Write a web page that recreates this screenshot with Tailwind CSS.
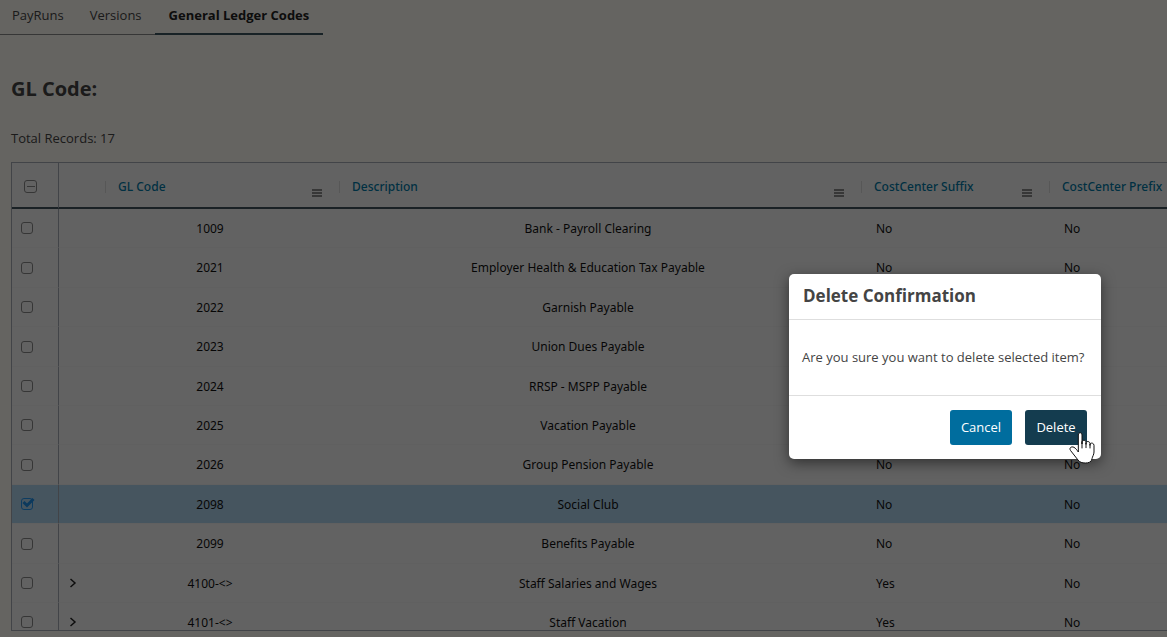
<!DOCTYPE html>
<html lang="en">
<head>
<meta charset="utf-8">
<meta name="viewport" content="width=device-width, initial-scale=1">
<title>General Ledger Codes</title>
<script src="https://cdn.jsdelivr.net/npm/@tailwindcss/browser@4"></script>
</head>
<body class="relative h-screen overflow-hidden bg-[#fdfaf3] font-['Open_Sans',sans-serif] text-[13px] text-[#444]">
<svg class="hidden" aria-hidden="true">
  <symbol id="menu" viewBox="0 0 10 8"><path d="M0 1h10M0 4h10M0 7h10" stroke="#666" stroke-width="1.4"/></symbol>
  <symbol id="chevron" viewBox="0 0 8 10"><path d="M1.5 1 6 5 1.5 9" fill="none" stroke="#222" stroke-width="1.5"/></symbol>
</svg>
<nav class="flex h-[35px] items-stretch leading-[30px]">
  <a href="#payruns" class="border-b border-[#888] pl-3 pr-[13px]">PayRuns</a>
  <a href="#versions" class="border-b border-[#888] px-[13px]">Versions</a>
  <a href="#ledger" class="border-b-2 border-[#3c5560] px-[14px] font-bold text-[#222]">General Ledger Codes</a>
</nav>
<main class="pl-[11px]">
  <h1 class="pt-10 text-xl leading-7 font-bold">GL Code:</h1>
  <p class="pt-[25px] leading-5">Total Records: 17</p>
  <div class="mt-[14px] h-[469px] overflow-hidden border-y border-l border-[#a6abb3] bg-[#f6f6f6]">
    <table class="w-full table-fixed border-separate border-spacing-0 font-['Noto_Sans',sans-serif] text-xs text-[#111]">
      <colgroup><col class="w-[47px]"><col class="w-[46px]"><col class="w-[234px]"><col><col class="w-[188px]"><col class="w-[118px]"></colgroup>
      <thead class="text-left text-[#0079a5] [&_th]:h-[46px] [&_th]:border-b-2 [&_th]:border-[#43545c] [&_th]:px-0 [&_th]:pt-[3px] [&_th]:pb-0 [&_th]:font-medium">
        <tr>
          <th class="border-r border-r-[#a6abb3]!"><input type="checkbox" aria-label="Select all rows" class="ml-3 block size-[13px] appearance-none rounded-[3px] border border-[#888] bg-[linear-gradient(#888,#888)] bg-[length:8px_1px] bg-center bg-no-repeat"></th>
          <th aria-label="Expand"></th>
          <th><div class="flex h-3 items-center border-l border-[#dadada] pr-[17px] pl-3"><span class="flex-1">GL Code</span><button type="button" aria-label="GL Code menu" class="pt-3"><svg class="h-2 w-[10px]"><use href="#menu"/></svg></button></div></th>
          <th><div class="flex h-3 items-center border-l border-[#dadada] pr-[17px] pl-3"><span class="flex-1">Description</span><button type="button" aria-label="Description menu" class="pt-3"><svg class="h-2 w-[10px]"><use href="#menu"/></svg></button></div></th>
          <th><div class="flex h-3 items-center border-l border-[#dadada] pr-[17px] pl-3"><span class="flex-1">CostCenter Suffix</span><button type="button" aria-label="CostCenter Suffix menu" class="pt-3"><svg class="h-2 w-[10px]"><use href="#menu"/></svg></button></div></th>
          <th><div class="flex h-3 items-center border-l border-[#dadada] pl-3 whitespace-nowrap">CostCenter Prefix</div></th>
        </tr>
      </thead>
      <tbody class="[&_td]:h-[39px] [&_td]:border-b [&_td]:border-[#f0f0f0] [&_td]:p-0 [&>tr:nth-child(5n+2)>td]:h-10 [&>tr:nth-child(5n+4)>td]:h-10 [&_td:nth-child(1)]:border-r [&_td:nth-child(1)]:border-r-[#a6abb3] [&_td:nth-child(n+3)]:pt-px [&_td:nth-child(3)]:pr-6 [&_td:nth-child(3)]:text-center [&_td:nth-child(4)]:pr-6 [&_td:nth-child(4)]:text-center [&_td:nth-child(5)]:pl-[15px] [&_td:nth-child(6)]:pl-[15px] [&_input]:ml-[9px] [&_input]:block [&_input]:size-3 [&_input]:appearance-none [&_input]:rounded-[3px] [&_input]:border [&_input]:border-[#888]">
        <tr><td><input type="checkbox" aria-label="Select 1009"></td><td></td><td>1009</td><td>Bank - Payroll Clearing</td><td>No</td><td>No</td></tr>
        <tr><td><input type="checkbox" aria-label="Select 2021"></td><td></td><td>2021</td><td>Employer Health &amp; Education Tax Payable</td><td>No</td><td>No</td></tr>
        <tr><td><input type="checkbox" aria-label="Select 2022"></td><td></td><td>2022</td><td>Garnish Payable</td><td>No</td><td>No</td></tr>
        <tr><td><input type="checkbox" aria-label="Select 2023"></td><td></td><td>2023</td><td>Union Dues Payable</td><td>No</td><td>No</td></tr>
        <tr><td><input type="checkbox" aria-label="Select 2024"></td><td></td><td>2024</td><td>RRSP - MSPP Payable</td><td>No</td><td>No</td></tr>
        <tr><td><input type="checkbox" aria-label="Select 2025"></td><td></td><td>2025</td><td>Vacation Payable</td><td>No</td><td>No</td></tr>
        <tr><td><input type="checkbox" aria-label="Select 2026"></td><td></td><td>2026</td><td>Group Pension Payable</td><td>No</td><td>No</td></tr>
        <tr class="bg-[#b0d5ee]"><td><div class="relative"><input type="checkbox" checked aria-label="Select 2098" class="border-[#2196f3]!"><svg class="pointer-events-none absolute top-0 left-[10px] h-[10px] w-[13px]" viewBox="0 0 13 10"><path d="M1.5 4 5 7.5 11.5 1" fill="none" stroke="#1e90e8" stroke-width="3"/></svg></div></td><td></td><td>2098</td><td>Social Club</td><td>No</td><td>No</td></tr>
        <tr><td><input type="checkbox" aria-label="Select 2099"></td><td></td><td>2099</td><td>Benefits Payable</td><td>No</td><td>No</td></tr>
        <tr><td><input type="checkbox" aria-label="Select 4100"></td><td><button type="button" aria-label="Expand 4100" class="ml-[10px] block"><svg class="h-[10px] w-2"><use href="#chevron"/></svg></button></td><td>4100-&lt;&gt;</td><td>Staff Salaries and Wages</td><td>Yes</td><td>No</td></tr>
        <tr><td><input type="checkbox" aria-label="Select 4101"></td><td><button type="button" aria-label="Expand 4101" class="ml-[10px] block"><svg class="h-[10px] w-2"><use href="#chevron"/></svg></button></td><td>4101-&lt;&gt;</td><td>Staff Vacation</td><td>Yes</td><td>No</td></tr>
      </tbody>
    </table>
  </div>
</main>
<div class="absolute inset-0 bg-black/60"></div>
<section role="dialog" aria-modal="true" aria-labelledby="dialog-title" class="absolute top-[274px] right-[66px] w-[312px] rounded-[5px] bg-white shadow-[0_4px_14px_rgba(0,0,0,0.5)]">
  <h2 id="dialog-title" class="border-b border-[#dedede] px-[14px] pt-[10px] pb-[11px] text-[17px] leading-6 font-bold">Delete Confirmation</h2>
  <p class="border-b border-[#dedede] px-[13px] pt-[27px] pb-7 leading-5 whitespace-nowrap">Are you sure you want to delete selected item?</p>
  <div class="flex justify-end gap-[13px] p-[14px]">
    <button type="button" class="h-[35px] w-[62px] rounded-[3px] bg-[#006d9e] font-medium text-white">Cancel</button>
    <button type="button" class="h-[35px] w-[62px] rounded-[3px] bg-[#143c4f] font-medium text-white">Delete</button>
  </div>
  <svg class="pointer-events-none absolute top-[158px] left-[280px] h-[32px] w-[27px]" viewBox="0 0 81 96" aria-hidden="true">
    <path d="M28 60V9c0-9 11-9 11 0v27-5c0-8 12-8 12 0v6-3c0-8 12-7 12 1v5-2c0-7 12-6 12 2v20c0 8-5 14-6 20-1 10-10 13-20 13s-16-2-22-9L5 56c-6-8 2-14 10-10 5 3 9 8 13 14Z" fill="#fff" stroke="#111" stroke-width="3" stroke-linejoin="round"/>
    <path d="M39 30v18M51 34v13M63 38v10" stroke="#111" stroke-width="3" stroke-linecap="round"/>
  </svg>
</section>
</body>
</html>
